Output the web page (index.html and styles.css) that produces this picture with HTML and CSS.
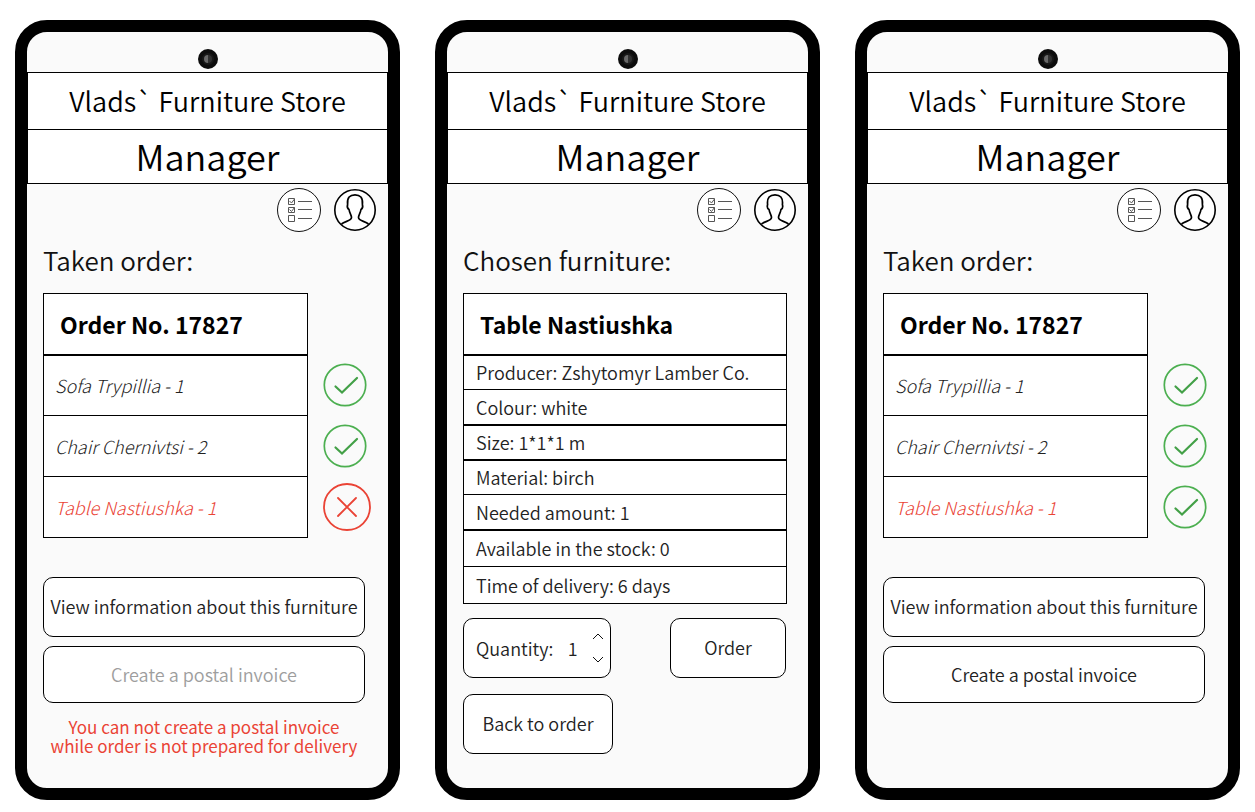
FILE: index.html
```html
<!DOCTYPE html>
<html lang="en">
<head>
<meta charset="utf-8">
<title>Vlads` Furniture Store – Manager</title>
<link rel="stylesheet" href="styles.css">
</head>
<body>
<svg class="sprite" aria-hidden="true">
  <symbol id="camera" viewBox="0 0 20 20">
    <circle cx="10" cy="10" r="10" fill="#0c0c0c"/>
    <circle cx="10" cy="10" r="6" fill="#181818"/>
    <path d="M10 6a4 4 0 0 0 0 8z" fill="#686868"/>
    <path d="M10 6a4 4 0 0 1 0 8z" fill="#303030"/>
  </symbol>
  <symbol id="list" viewBox="0 0 44 44">
    <circle cx="22" cy="22" r="21.5" fill="#fff" stroke="#111"/>
    <g fill="none" stroke="#555">
      <path d="M11.5 10.5h6v6h-6zM11.5 19.5h6v5h-6zM11.5 27.5h6v6h-6z"/>
      <path d="M12.5 13l2 2 3-4M12.5 21.5l2 2 3-4"/>
      <path d="M21 13.5h14M21 21.5h14M21 30.5h14"/>
    </g>
  </symbol>
  <symbol id="user" viewBox="0 0 42 42">
    <circle cx="21" cy="21" r="20.2" fill="#fff" stroke="#000" stroke-width="1.6"/>
    <path d="M7.500 35C11 32 17.500 32 17.500 28.500C17.500 26 15.500 24 15 20.500C13.300 19.500 13 17.500 13.600 15.500C12.800 8.500 16 5.800 21 5.800C26 5.800 29.200 8.500 28.400 15.500C29 17.500 28.700 19.500 27 20.500C26.500 24 24.500 26 24.500 28.500C24.500 32 31 32 34.500 35" fill="none" stroke="#000" stroke-width="1.7"/>
  </symbol>
  <symbol id="check" viewBox="0 0 44 44">
    <circle cx="22" cy="22" r="20.700" fill="none" stroke="#4caf50" stroke-width="1.700"/>
    <path d="M12.500 23.500l6.500 6L34 15" fill="none" stroke="#43a047" stroke-width="2.200" stroke-linecap="round"/>
  </symbol>
  <symbol id="cross" viewBox="0 0 48 48">
    <circle cx="24" cy="24" r="23" fill="none" stroke="#ea4335" stroke-width="1.800"/>
    <path d="M15 15l18 18M33 15L15 33" fill="none" stroke="#ea4335" stroke-width="1.800" stroke-linecap="round"/>
  </symbol>
</svg>

<main class="screens">
  <section class="phone">
    <div class="camera"><svg class="icon-camera"><use href="#camera"/></svg></div>
    <header>
      <h1 class="store">Vlads` Furniture Store</h1>
      <p class="role">Manager</p>
    </header>
    <nav class="toolbar">
      <button class="icon-btn" aria-label="Orders"><svg class="icon-list"><use href="#list"/></svg></button>
      <button class="icon-btn" aria-label="Profile"><svg class="icon-user"><use href="#user"/></svg></button>
    </nav>
    <div class="content">
      <h2 class="title">Taken order:</h2>
      <table class="order">
        <tr><th scope="col">Order No. 17827</th></tr>
        <tr><td>Sofa Trypillia - 1</td><td class="status"><svg class="icon-check" role="img" aria-label="Ready"><use href="#check"/></svg></td></tr>
        <tr><td>Chair Chernivtsi - 2</td><td class="status"><svg class="icon-check" role="img" aria-label="Ready"><use href="#check"/></svg></td></tr>
        <tr><td class="missing">Table Nastiushka - 1</td><td class="status"><svg class="icon-cross" role="img" aria-label="Not ready"><use href="#cross"/></svg></td></tr>
      </table>
      <div class="actions">
        <button class="btn">View information about this furniture</button>
        <button class="btn btn-low" disabled>Create a postal invoice</button>
        <p class="warning">You can not create a postal invoice<br>while order is not prepared for delivery</p>
      </div>
    </div>
  </section>

  <section class="phone">
    <div class="camera"><svg class="icon-camera"><use href="#camera"/></svg></div>
    <header>
      <h1 class="store">Vlads` Furniture Store</h1>
      <p class="role">Manager</p>
    </header>
    <nav class="toolbar">
      <button class="icon-btn" aria-label="Orders"><svg class="icon-list"><use href="#list"/></svg></button>
      <button class="icon-btn" aria-label="Profile"><svg class="icon-user"><use href="#user"/></svg></button>
    </nav>
    <div class="content">
      <h2 class="title">Chosen furniture:</h2>
      <table class="details">
        <tr><th scope="col">Table Nastiushka</th></tr>
        <tr><td>Producer: Zshytomyr Lamber Co.</td></tr>
        <tr><td class="thick">Colour: white</td></tr>
        <tr><td class="thick">Size: 1*1*1 m</td></tr>
        <tr><td>Material: birch</td></tr>
        <tr><td class="thick">Needed amount: 1</td></tr>
        <tr><td class="tall">Available in the stock: 0</td></tr>
        <tr><td class="tall">Time of delivery: 6 days</td></tr>
      </table>
      <form class="purchase">
        <div class="quantity">
          <label for="qty">Quantity:</label>
          <input id="qty" type="text" inputmode="numeric" value="1">
          <span class="stepper">
            <button type="button" aria-label="Increase"><svg viewBox="0 0 12 8"><path d="M1 7l5-5 5 5"/></svg></button>
            <button type="button" aria-label="Decrease"><svg viewBox="0 0 12 8"><path d="M1 1l5 5 5-5"/></svg></button>
          </span>
        </div>
        <button type="button" class="btn btn-order">Order</button>
      </form>
      <button class="btn btn-back">Back to order</button>
    </div>
  </section>

  <section class="phone">
    <div class="camera"><svg class="icon-camera"><use href="#camera"/></svg></div>
    <header>
      <h1 class="store">Vlads` Furniture Store</h1>
      <p class="role">Manager</p>
    </header>
    <nav class="toolbar">
      <button class="icon-btn" aria-label="Orders"><svg class="icon-list"><use href="#list"/></svg></button>
      <button class="icon-btn" aria-label="Profile"><svg class="icon-user"><use href="#user"/></svg></button>
    </nav>
    <div class="content">
      <h2 class="title">Taken order:</h2>
      <table class="order">
        <tr><th scope="col">Order No. 17827</th></tr>
        <tr><td>Sofa Trypillia - 1</td><td class="status"><svg class="icon-check" role="img" aria-label="Ready"><use href="#check"/></svg></td></tr>
        <tr><td>Chair Chernivtsi - 2</td><td class="status"><svg class="icon-check" role="img" aria-label="Ready"><use href="#check"/></svg></td></tr>
        <tr><td class="missing">Table Nastiushka - 1</td><td class="status"><svg class="icon-check" role="img" aria-label="Ready"><use href="#check"/></svg></td></tr>
      </table>
      <div class="actions">
        <button class="btn">View information about this furniture</button>
        <button class="btn btn-low">Create a postal invoice</button>
      </div>
    </div>
  </section>
</main>
</body>
</html>
```
FILE: styles.css
```css
* { box-sizing: border-box; }

body {
  margin: 0;
  background: #fff;
  color: #222;
  font-family: "Noto Sans CJK SC", "Noto Sans", sans-serif;
  font-weight: 350;
  font-size: 18px;
  line-height: 24px;
}

h1, h2, p { margin: 0; font-weight: 350; }
button, input { font: inherit; color: inherit; }
svg { display: block; }
.sprite { position: absolute; width: 0; height: 0; }

.screens {
  display: grid;
  grid-template-columns: repeat(3, minmax(0, 1fr));
  gap: 35px;
  padding: 20px 15px 12px;
}

.phone {
  min-height: 780px;
  border: 12px solid #000;
  border-radius: 32px;
  background: #fafafa;
}

.camera { display: flex; justify-content: center; height: 40px; padding-top: 17px; }
.icon-camera { width: 20px; height: 20px; }

.store, .role {
  border: 1px solid #000;
  background: #fff;
  color: #000;
  text-align: center;
}
.store { font-size: 27px; line-height: 56px; }
.role { border-top: 0; padding-bottom: 3px; font-size: 36px; line-height: 50px; }

.toolbar { display: flex; justify-content: flex-end; gap: 13px; padding: 4px 12px 0; }
.icon-btn { padding: 0; border: 0; background: none; }
.icon-list { width: 44px; height: 44px; }
.icon-user { width: 42px; height: 42px; }

.content { padding: 8px 16px 16px; }
.title { padding-bottom: 13px; font-size: 26px; line-height: 40px; color: #111; }

table { border-collapse: collapse; width: 100%; }
th, td { border: 1px solid #000; padding: 0 12px; background: #fff; text-align: left; }
th {
  height: 61px;
  border-bottom-width: 2px;
  padding: 0 16px;
  color: #000;
  font-size: 23px;
  font-weight: 700;
}
.order td { height: 61px; padding-left: 11px; font-style: italic; font-weight: 300; }
.order .missing { color: #ea4335; }
.order .status { width: 64px; border: 0; padding: 0 0 0 15px; background: none; }
.icon-check { width: 44px; height: 44px; }
.icon-cross { width: 48px; height: 48px; }

.details { width: 324px; max-width: 100%; }
.details td { height: 35px; }
.details .thick { border-bottom-width: 2px; }
.details .tall { height: 37px; }

.actions { display: grid; gap: 9px; padding: 39px 7px 0 0; }
.btn {
  height: 60px;
  border: 1px solid #000;
  border-radius: 10px;
  padding: 0 0 2px;
  background: #fff;
  white-space: nowrap;
}
.btn-low { height: 57px; }
.btn:disabled { color: #9e9e9e; }
.warning { padding-top: 5px; color: #ea4335; font-size: 17px; font-weight: 400; text-align: center; line-height: 19px; }

.purchase { display: flex; justify-content: space-between; padding: 14px 6px 16px 0; }
.quantity {
  display: flex;
  align-items: center;
  width: 148px;
  height: 60px;
  border: 1px solid #000;
  border-radius: 10px;
  padding: 0 6px 0 12px;
  background: #fff;
}
.quantity input { flex: 1; min-width: 0; width: 20px; border: 0; padding: 0; background: none; text-align: center; }
.stepper { display: grid; gap: 16px; }
.stepper button { padding: 0; border: 0; background: none; }
.stepper svg { width: 12px; height: 8px; fill: none; stroke: #111; }
.btn-order { width: 116px; }
.btn-back { width: 150px; }
```
